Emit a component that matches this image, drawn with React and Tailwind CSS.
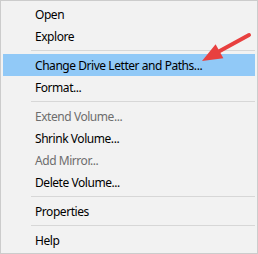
const items = [
    { label: 'Open' },
    { label: 'Explore' },
    { sep: true },
    { label: 'Change Drive Letter and Paths...', active: true },
    { label: 'Format...' },
    { sep: true },
    { label: 'Extend Volume...', disabled: true },
    { label: 'Shrink Volume...' },
    { label: 'Add Mirror...', disabled: true },
    { label: 'Delete Volume...' },
    { sep: true },
    { label: 'Properties' },
    { sep: true },
    { label: 'Help' },
];

const App = () => {
    return (
        <div
            className="relative w-[258px] h-[254px] bg-[#f2f2f2] border border-[#cccccc] p-[2px] text-[12px] tracking-[-0.45px]"
            style={{ fontFamily: '"Noto Sans", "Open Sans", sans-serif' }}
        >
            {items.map((item, index) =>
                item.sep ? (
                    <div key={index} className="py-[3px] pl-[28px]">
                        <div className="h-px bg-[#d7d7d7]" />
                    </div>
                ) : (
                    <div
                        key={index}
                        className={`h-[22px] flex items-center pl-[32px] pt-px ${item.active ? 'bg-[#91c9f7]' : ''} ${item.disabled ? 'text-[#6d6d6d]' : 'text-black'}`}
                    >
                        {item.label}
                    </div>
                )
            )}

            {/* red pointer arrow */}
            <svg className="absolute top-0 left-0 pointer-events-none" width="258" height="254" viewBox="0 0 258 254">
                <line x1="248" y1="34" x2="216" y2="51.5" stroke="#e8403f" strokeWidth="4" strokeLinecap="round" />
                <polygon points="201,60 214.6,43.3 222.4,57.3" fill="#e8403f" />
            </svg>
        </div>
    );
};

export default App;
